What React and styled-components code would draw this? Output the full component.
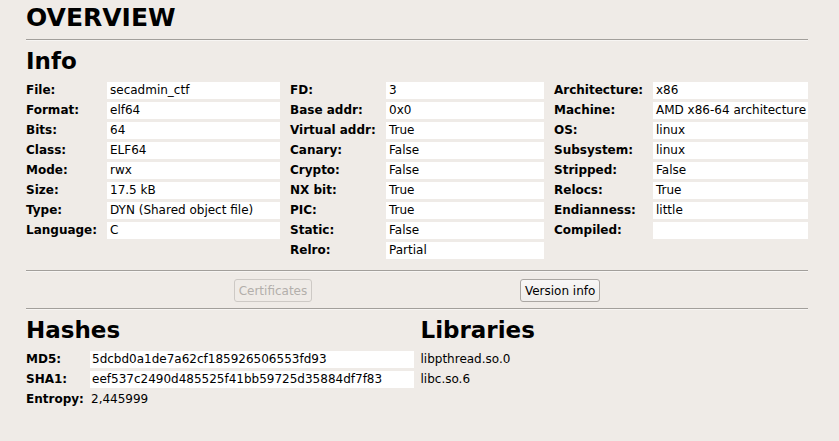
import React from 'react';
import styled, { createGlobalStyle } from 'styled-components';

const GlobalStyle = createGlobalStyle`
  html, body {
    margin: 0;
    padding: 0;
    background: #efebe7;
  }
  body {
    font-family: 'DejaVu Sans', 'Liberation Sans', sans-serif;
    font-size: 12px;
    color: #000;
  }
`;

const Page = styled.div`
  width: 782px;
  padding: 4px 0 0 26px;
`;

const Title = styled.h1`
  margin: 0;
  font-size: 25px;
  line-height: 28px;
  font-weight: bold;
`;

const Heading = styled.h2`
  margin: ${(p) => p.$top || 0}px 0 0 0;
  font-size: 23px;
  line-height: 28px;
  font-weight: bold;
`;

const Separator = styled.div`
  margin-top: ${(p) => p.$top}px;
  height: 1px;
  background: #a29f9b;
  border-bottom: 1px solid #f7f5f3;
`;

const InfoGrid = styled.div`
  display: flex;
  gap: 10px;
  margin-top: 7px;
`;

const FieldColumn = styled.div`
  flex: 1;
  display: grid;
  grid-template-columns: ${(p) => p.$label}px 1fr;
  grid-auto-rows: 17px;
  row-gap: 3px;
  align-content: start;
  margin-top: ${(p) => p.$top || 0}px;
`;

const Label = styled.div`
  font-weight: bold;
  line-height: 17px;
  white-space: nowrap;
`;

const Value = styled.div`
  background: ${(p) => (p.$plain ? 'transparent' : '#fff')};
  line-height: 17px;
  padding-left: ${(p) => p.$pad ?? 3}px;
  white-space: nowrap;
  overflow: hidden;
`;

const ButtonRow = styled.div`
  display: flex;
  justify-content: space-evenly;
  margin-top: 7px;
`;

const Button = styled.button`
  height: 23px;
  padding: 0 4px;
  font-family: inherit;
  font-size: 12px;
  color: ${(p) => (p.disabled ? '#b3afab' : '#000')};
  background: ${(p) => (p.disabled ? '#efebe7' : 'linear-gradient(#f8f7f6, #efedeb)')};
  border: 1px solid ${(p) => (p.disabled ? '#cdc9c5' : '#aaa6a2')};
  border-radius: 3px;
`;

const Bottom = styled.div`
  display: flex;
  gap: 7px;
`;

const Section = styled.div`
  flex: 1;
  margin-top: 6px;
`;

const List = styled.div`
  margin-top: 7px;
  display: grid;
  grid-auto-rows: 17px;
  row-gap: 3px;
`;

const ListItem = styled.div`
  line-height: 17px;
`;

const columns = [
  {
    label: 81,
    rows: [
      ['File:', 'secadmin_ctf'],
      ['Format:', 'elf64'],
      ['Bits:', '64'],
      ['Class:', 'ELF64'],
      ['Mode:', 'rwx'],
      ['Size:', '17.5 kB'],
      ['Type:', 'DYN (Shared object file)'],
      ['Language:', 'C'],
    ],
  },
  {
    label: 96,
    rows: [
      ['FD:', '3'],
      ['Base addr:', '0x0'],
      ['Virtual addr:', 'True'],
      ['Canary:', 'False'],
      ['Crypto:', 'False'],
      ['NX bit:', 'True'],
      ['PIC:', 'True'],
      ['Static:', 'False'],
      ['Relro:', 'Partial'],
    ],
  },
  {
    label: 99,
    rows: [
      ['Architecture:', 'x86'],
      ['Machine:', 'AMD x86-64 architecture'],
      ['OS:', 'linux'],
      ['Subsystem:', 'linux'],
      ['Stripped:', 'False'],
      ['Relocs:', 'True'],
      ['Endianness:', 'little'],
      ['Compiled:', ''],
    ],
  },
];

const App = () => (
  <>
    <GlobalStyle />
    <Page>
      <Title>OVERVIEW</Title>
      <Separator $top={7} />
      <Heading $top={6}>Info</Heading>
      <InfoGrid>
        {columns.map((col, i) => (
          <FieldColumn key={i} $label={col.label}>
            {col.rows.map(([k, v]) => (
              <React.Fragment key={k}>
                <Label>{k}</Label>
                <Value>{v}</Value>
              </React.Fragment>
            ))}
          </FieldColumn>
        ))}
      </InfoGrid>
      <Separator $top={11} />
      <ButtonRow>
        <Button disabled>Certificates</Button>
        <Button>Version info</Button>
      </ButtonRow>
      <Separator $top={6} />
      <Bottom>
        <Section>
          <Heading>Hashes</Heading>
          <FieldColumn $label={64} $top={7}>
            <Label>MD5:</Label>
            <Value $pad={2}>5dcbd0a1de7a62cf185926506553fd93</Value>
            <Label>SHA1:</Label>
            <Value $pad={2}>eef537c2490d485525f41bb59725d35884df7f83</Value>
            <Label>Entropy:</Label>
            <Value $plain $pad={1}>2,445999</Value>
          </FieldColumn>
        </Section>
        <Section>
          <Heading>Libraries</Heading>
          <List>
            <ListItem>libpthread.so.0</ListItem>
            <ListItem>libc.so.6</ListItem>
          </List>
        </Section>
      </Bottom>
    </Page>
  </>
);

export default App;
